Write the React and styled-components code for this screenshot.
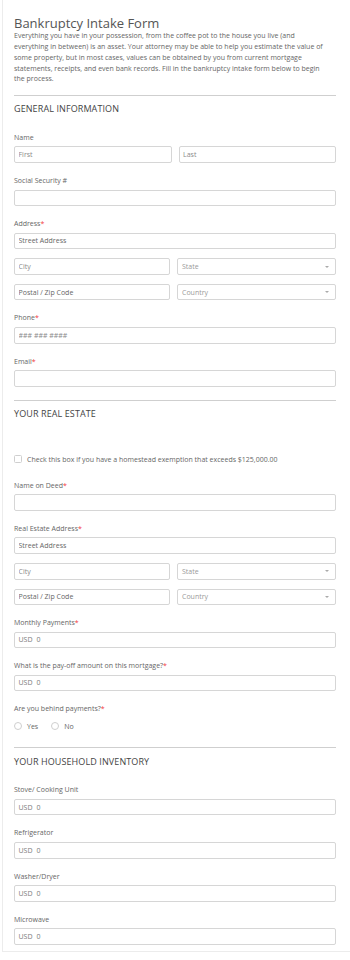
import React from 'react';
import styled, { createGlobalStyle } from 'styled-components';

const GlobalStyle = createGlobalStyle`
  html, body {
    margin: 0;
    padding: 0;
    background: #fff;
  }
  body {
    font-family: "Open Sans", "Liberation Sans", sans-serif;
    color: #555;
  }
  * { box-sizing: border-box; }
`;

const Card = styled.div`
  margin-left: 2px;
  border-left: 1px solid #ececec;
  border-bottom: 1px solid #ececec;
  padding: 15.3px 14px 0 11px;
`;

const Title = styled.h1`
  margin: 0;
  font-size: 13px;
  line-height: 16px;
  font-weight: 400;
  color: #555;
`;

const Description = styled.p`
  margin: 0 0 9.7px;
  font-size: 7px;
  line-height: 10.8px;
  color: #666;
  white-space: nowrap;
`;

const Field = styled.div`
  padding-bottom: 13px;
`;

const Section = styled.section`
  border-top: 1px solid #cfcfcf;
  padding-top: 7.5px;
  &:last-child ${Field}:last-child { padding-bottom: 6.5px; }
`;

const SectionHeader = styled.h2`
  margin: 0 0 17.5px;
  font-size: 9px;
  line-height: 12px;
  font-weight: 400;
  color: #444;
  text-transform: uppercase;
  letter-spacing: 0.1px;
`;

const Label = styled.div`
  height: 10px;
  margin-bottom: 3.5px;
  font-size: 7px;
  line-height: 10px;
  color: #666;
`;

const Required = styled.span`
  color: #f23a3c;
`;

const Row = styled.div`
  display: flex;
  gap: 7px;
  & + & { margin-top: 9px; }
`;

const boxStyles = `
  height: 16.6px;
  border: 1px solid #d6d6d6;
  border-radius: 2px;
  background: #fff;
  font-family: "Open Sans", "Liberation Sans", sans-serif;
  font-size: 7px;
`;

const Input = styled.input`
  ${boxStyles}
  flex: 1;
  min-width: 0;
  width: 100%;
  padding: 0 3.5px;
  outline: none;
  color: #555;
  &::placeholder { color: ${p => p.$dark ? '#666' : '#8a8a8a'}; }
`;

const Select = styled.div`
  ${boxStyles}
  flex: 1;
  min-width: 0;
  display: flex;
  align-items: center;
  justify-content: space-between;
  padding: 0 6px 0 4px;
  color: #9a9a9a;
`;

const Arrow = styled.span`
  width: 0;
  height: 0;
  border-left: 2px solid transparent;
  border-right: 2px solid transparent;
  border-top: 2px solid #aaa;
`;

const Currency = styled.div`
  ${boxStyles}
  display: flex;
  align-items: center;
  gap: 4px;
  padding: 0 3.5px;
  color: #7a7a7a;
`;

const Choice = styled.div`
  height: 16.6px;
  display: flex;
  align-items: center;
  gap: 13px;
  font-size: 7px;
  color: #666;
`;

const Option = styled.label`
  display: flex;
  align-items: center;
  gap: 5px;
`;

const Mark = styled.span`
  width: 8px;
  height: 8px;
  border: 1px solid #cfcfcf;
  border-radius: ${p => p.$round ? '50%' : '1.5px'};
  background: #fff;
`;

const Req = () => <Required>*</Required>;

const AddressFields = () => (
  <>
    <Row><Input placeholder="Street Address" $dark readOnly /></Row>
    <Row>
      <Input placeholder="City" readOnly />
      <Select>State<Arrow /></Select>
    </Row>
    <Row>
      <Input placeholder="Postal / Zip Code" $dark readOnly />
      <Select>Country<Arrow /></Select>
    </Row>
  </>
);

const Money = ({ label, required }) => (
  <Field>
    <Label>{label}{required && <Req />}</Label>
    <Currency><span>USD</span><span>0</span></Currency>
  </Field>
);

export default function App() {
  return (
    <>
      <GlobalStyle />
      <Card>
        <Title>Bankruptcy Intake Form</Title>
        <Description>
          Everything you have in your possession, from the coffee pot to the house you live (and<br />
          everything in between) is an asset. Your attorney may be able to help you estimate the value of<br />
          some property, but in most cases, values can be obtained by you from current mortgage<br />
          statements, receipts, and even bank records. Fill in the bankruptcy intake form below to begin<br />
          the process.
        </Description>

        <Section>
          <SectionHeader>General Information</SectionHeader>
          <Field>
            <Label>Name</Label>
            <Row>
              <Input placeholder="First" readOnly />
              <Input placeholder="Last" readOnly />
            </Row>
          </Field>
          <Field>
            <Label>Social Security #</Label>
            <Row><Input readOnly /></Row>
          </Field>
          <Field>
            <Label>Address<Req /></Label>
            <AddressFields />
          </Field>
          <Field>
            <Label>Phone<Req /></Label>
            <Row><Input placeholder="### ### ####" readOnly /></Row>
          </Field>
          <Field>
            <Label>Email<Req /></Label>
            <Row><Input readOnly /></Row>
          </Field>
        </Section>

        <Section>
          <SectionHeader>Your Real Estate</SectionHeader>
          <Field>
            <Label />
            <Choice>
              <Option><Mark />Check this box if you have a homestead exemption that exceeds $125,000.00</Option>
            </Choice>
          </Field>
          <Field>
            <Label>Name on Deed<Req /></Label>
            <Row><Input readOnly /></Row>
          </Field>
          <Field>
            <Label>Real Estate Address<Req /></Label>
            <AddressFields />
          </Field>
          <Money label="Monthly Payments" required />
          <Money label="What is the pay-off amount on this mortgage?" required />
          <Field>
            <Label>Are you behind payments?<Req /></Label>
            <Choice>
              <Option><Mark $round />Yes</Option>
              <Option><Mark $round />No</Option>
            </Choice>
          </Field>
        </Section>

        <Section>
          <SectionHeader>Your Household Inventory</SectionHeader>
          <Money label="Stove/ Cooking Unit" />
          <Money label="Refrigerator" />
          <Money label="Washer/Dryer" />
          <Money label="Microwave" />
        </Section>
      </Card>
    </>
  );
}
